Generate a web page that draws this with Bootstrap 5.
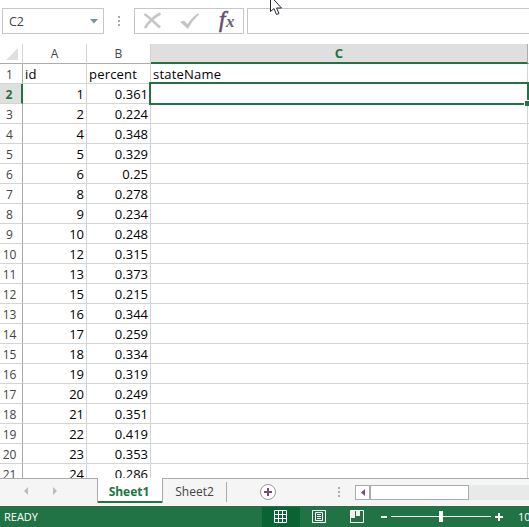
<!DOCTYPE html>
<html lang="en">
<head>
<meta charset="utf-8">
<meta name="viewport" content="width=device-width, initial-scale=1">
<title>Sheet1</title>
<link href="https://cdn.jsdelivr.net/npm/bootstrap@5.3.0/dist/css/bootstrap.min.css" rel="stylesheet">
<style>
  :root { --xl: #217346; --line: #c6c6c6; --grid: #d4d4d4; }
  body { font-family: "Open Sans", "Noto Sans", sans-serif; font-size: 12px; line-height: 1; color: #444; width: 529px; height: 527px; }
  svg { display: block; flex: none; }
  .formula-bar { height: 44px; padding: 8px 0 10px 2px; }
  .box { border: 1px solid var(--line); height: 26px; }
  .name-box { width: 102px; padding: 0 5px 0 6px; }
  .name-box span { padding-top: 2px; font-size: 12.5px; }
  .tools { width: 110px; margin-left: 7px; }
  .formula-input { margin-left: 3px; border-right: 0; }
  .dots { width: 23px; padding-left: 6px; }
  .sheet { height: 434px; }
  .cells { table-layout: fixed; width: 530px; border-collapse: separate; border-spacing: 0; }
  .cells th, .cells td { padding: 2px 0 0; height: 20px; line-height: 17px; white-space: nowrap; border-right: 1px solid var(--grid); border-bottom: 1px solid var(--grid); }
  .cells td { color: #000; font-size: 13px; padding: 2px 2px 0; letter-spacing: .2px; }
  .cells thead th { font-weight: 400; text-align: center; padding: 0; border-bottom: 1px solid #ababab; line-height: 18px; }
  .cells tbody th { font-weight: 400; text-align: center; padding-right: 3px; border-right: 1px solid #ababab; }
  .cells thead .col-on { background: #dfdfdf; color: var(--xl); font-weight: 700; font-size: 13px; border-right-color: #ababab; border-bottom: 2px solid var(--xl); }
  .cells tbody .row-on { background: #dfdfdf; color: var(--xl); font-weight: 700; border-right: 2px solid var(--xl); }
  .cells td.num { text-align: right; letter-spacing: 0; }
  .selection { left: 149px; top: 38px; width: 380px; height: 23px; border: 2px solid var(--xl); }
  .handle { right: -3px; bottom: -3px; width: 6px; height: 6px; background: var(--xl); border: 1px solid #fff; border-right: 0; border-bottom: 0; }
  .tabs-bar { height: 28px; background: #f5f5f5; }
  .tabs-bar .edge { border-top: 1px solid #ababab; height: 28px; }
  .tab-on { width: 66px; height: 25px; padding: 2px 2px 0 0; background: #fff; color: var(--xl); font-weight: 700; font-size: 12px; border: solid #ababab; border-width: 0 1px; box-shadow: inset 0 -2px var(--xl); }
  .tab-off { width: 64px; height: 20px; margin-top: 3px; border-right: 1px solid #ababab; }
  .track { background: #e8eaea; height: 15px; margin-top: 6px; }
  .scroll-btn { width: 15px; border: 1px solid #ababab; background: #fff; }
  .thumb { width: 99px; border: 1px solid #ababab; background: #fff; }
  .status { height: 21px; background: var(--xl); color: #fff; font-size: 11px; }
  .ready { width: 262px; padding: 0 0 0 4px; }
  .view-on { width: 38px; height: 20px; margin-top: 1px; padding: 0 1px 1px 0; background: #0a6332; }
  .pointer { left: 270px; top: 0; }
</style>
</head>
<body class="bg-white overflow-hidden position-relative d-flex flex-column">
  <header class="formula-bar d-flex">
    <div class="box name-box d-flex align-items-center justify-content-between">
      <span>C2</span>
      <svg width="8" height="5" viewBox="0 0 8 5"><path d="M0 0h8L4 4.500z" fill="#77939c"/></svg>
    </div>
    <div class="dots d-flex align-items-center justify-content-center">
      <svg width="2" height="10"><path d="M0 0h2v2H0zM0 4h2v2H0zM0 8h2v2H0z" fill="#ababab"/></svg>
    </div>
    <div class="box tools">
      <svg width="108" height="24" viewBox="0 0 108 24">
        <path d="M9.500 5C14 8 20 14 25 18.500M25.500 4.500C20 7 13 13 10 19" fill="none" stroke="#c5c5c5" stroke-width="2.600"/>
        <path d="M45 13l4-1.500 3.500 3.500C56 10 59 7 63.500 4l.5 1.500C60 9 56 14 53 20z" fill="#c5c5c5"/>
        <text x="84" y="18" font-family="Liberation Serif, serif" font-style="italic" font-size="23" fill="#6b4a73" stroke="#6b4a73" stroke-width=".6">f</text>
        <text x="91" y="18" font-family="Liberation Serif, serif" font-style="italic" font-weight="700" font-size="17" fill="#6a6270">x</text>
      </svg>
    </div>
    <div class="box formula-input flex-grow-1"></div>
  </header>

  <main class="sheet position-relative overflow-hidden">
    <table class="cells">
      <colgroup><col style="width:23px"><col style="width:64px"><col style="width:64px"><col style="width:377px"><col style="width:2px"></colgroup>
      <thead>
        <tr>
          <th><svg class="ms-auto me-1" width="12" height="12"><path d="M12 0v12H0z" fill="#dfdfdf"/></svg></th>
          <th>A</th><th>B</th><th class="col-on">C</th><th></th>
        </tr>
      </thead>
      <tbody id="rows"></tbody>
    </table>
    <div class="selection position-absolute"><div class="handle position-absolute"></div></div>
  </main>

  <nav class="tabs-bar d-flex">
    <div class="edge d-flex align-items-center" style="width:97px">
      <svg width="97" height="27"><path d="M28 8v8l-4-4zM53 8v8l4-4z" fill="#bcbcbc"/></svg>
    </div>
    <div class="tab-on d-flex align-items-center justify-content-center">Sheet1</div>
    <div class="edge d-flex flex-grow-1">
      <div class="tab-off d-flex align-items-center justify-content-center">Sheet2</div>
      <svg width="128" height="27">
        <circle cx="41" cy="13" r="7.500" fill="#fff" stroke="#999"/>
        <path d="M37 12h3V9h2v3h3v2h-3v3h-2v-3h-3z" fill="#744c78"/>
        <path d="M111 8h2v2h-2zM111 12h2v2h-2zM111 16h2v2h-2z" fill="#ababab"/>
      </svg>
      <div class="track d-flex flex-grow-1">
        <div class="scroll-btn d-flex align-items-center justify-content-center"><svg width="4" height="7"><path d="M4 0v7L0 3.500z" fill="#744c78"/></svg></div>
        <div class="thumb"></div>
      </div>
    </div>
  </nav>

  <footer class="status d-flex align-items-center">
    <div class="ready flex-shrink-0">READY</div>
    <div class="view-on d-flex flex-shrink-0 align-items-center justify-content-center">
      <svg width="13" height="13"><path d="M.5.5h12v12H.5zM4.500 0v13M8.500 0v13M0 4.500h13M0 8.500h13" fill="none" stroke="#fff"/></svg>
    </div>
    <svg width="218" height="21" viewBox="300 506 218 21">
      <path d="M312.500 510.500h13v12h-13zM315.500 512.500h7v8h-7zM317 514.500h4M317 516.500h4M317 518.500h4" fill="none" stroke="#fff"/>
      <path d="M350.500 510.500h13v12h-13z" fill="none" stroke="#fff"/>
      <path d="M351 511h4v7h-4zM356 511h4v5h-4z" fill="#f0f0f0"/>
      <path d="M381 516h6v2h-6zM391 516h100v1H391zM439 511h4v11h-4zM495 516h3v-3h2v3h3v2h-3v3h-2v-3h-3z" fill="#fff"/>
    </svg>
    <span class="text-nowrap">100%</span>
  </footer>

  <svg class="pointer position-absolute" width="14" height="16"><path d="M.5-4V11.500L4 8.500l2.500 6 2.500-1-2.500-5.500h5z" fill="#fff" stroke="#2b2530"/></svg>

<script>
  const data = [[1, 0.361], [2, 0.224], [4, 0.348], [5, 0.329], [6, 0.25], [8, 0.278], [9, 0.234], [10, 0.248], [12, 0.315], [13, 0.373],
    [15, 0.215], [16, 0.344], [17, 0.259], [18, 0.334], [19, 0.319], [20, 0.249], [21, 0.351], [22, 0.419], [23, 0.353], [24, 0.286]];
  document.getElementById('rows').innerHTML =
    '<tr><th>1</th><td>id</td><td>percent</td><td>stateName</td><td></td></tr>' +
    data.map(([id, p], i) => `<tr><th class="${i ? '' : 'row-on'}">${i + 2}</th><td class="num">${id}</td><td class="num">${p}</td><td></td><td></td></tr>`).join('');
</script>
<script src="https://cdn.jsdelivr.net/npm/bootstrap@5.3.0/dist/js/bootstrap.bundle.min.js"></script>
</body>
</html>
